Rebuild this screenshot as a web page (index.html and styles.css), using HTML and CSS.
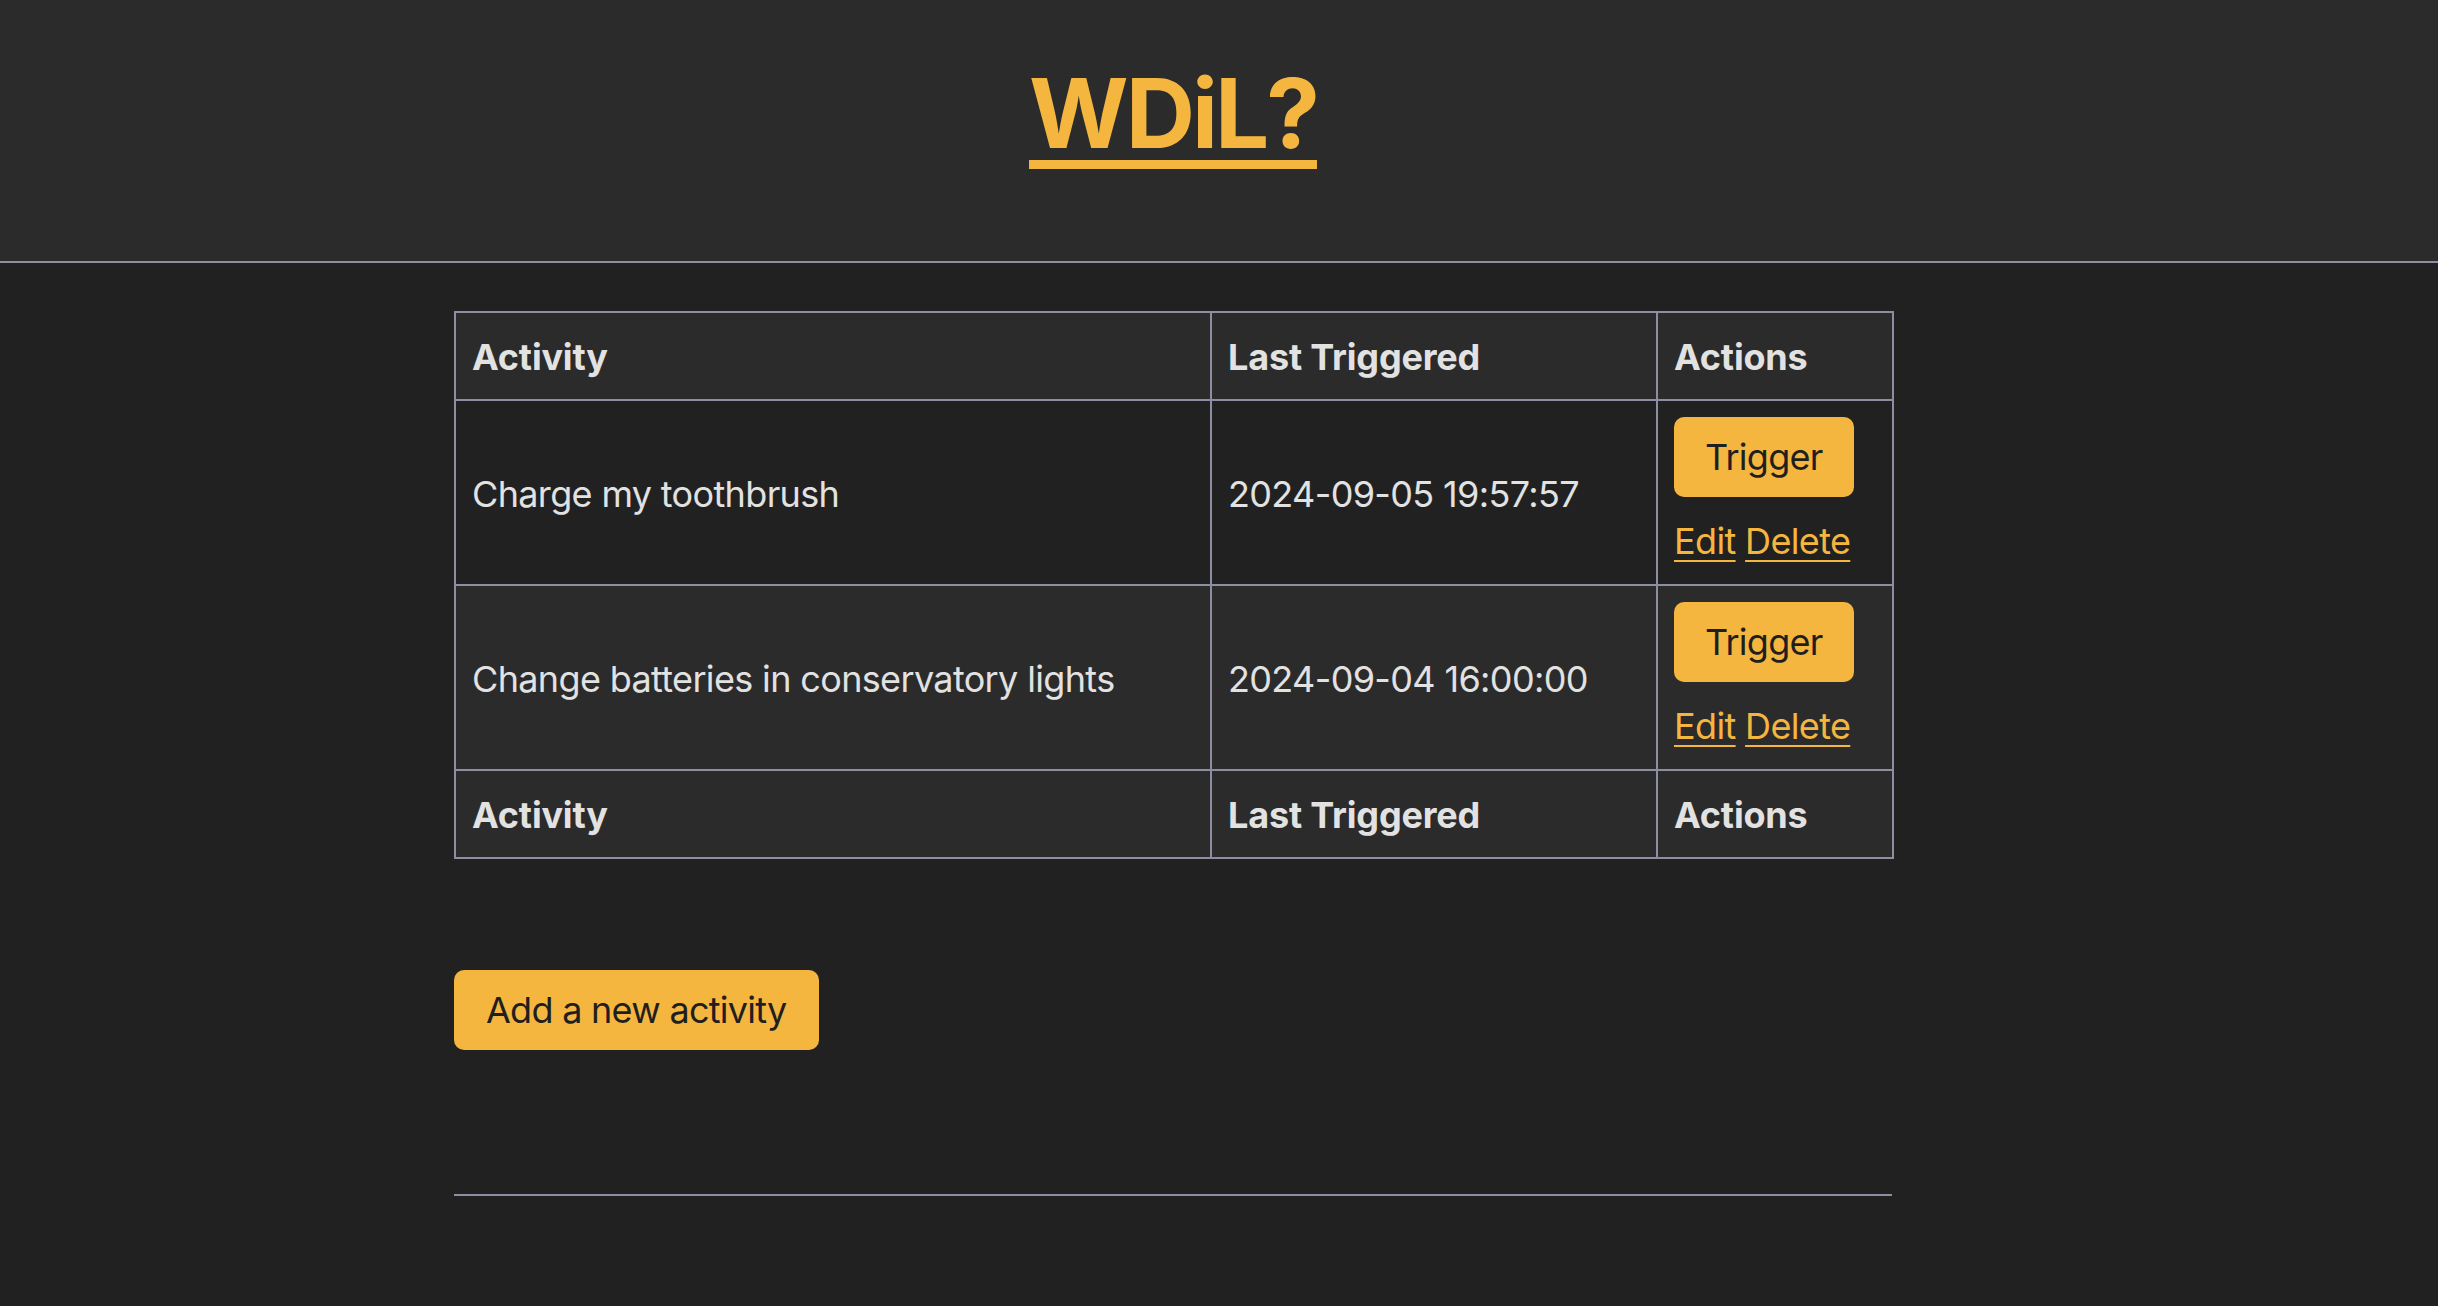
FILE: index.html
```html
<!DOCTYPE html>
<html lang="en">
<head>
<meta charset="utf-8">
<title>WDiL?</title>
<link rel="stylesheet" href="styles.css">
</head>
<body>
<header class="site-header">
  <div class="container header-inner">
    <h1 class="title"><a href="#">WDiL?</a></h1>
  </div>
</header>
<main class="container main">
  <table class="activities">
    <colgroup>
      <col class="col-activity">
      <col class="col-time">
      <col class="col-actions">
    </colgroup>
    <thead>
      <tr><th>Activity</th><th>Last Triggered</th><th>Actions</th></tr>
    </thead>
    <tbody>
      <tr>
        <td>Charge my toothbrush</td>
        <td>2024-09-05 19:57:57</td>
        <td class="actions">
          <button class="btn btn-trigger">Trigger</button>
          <div class="links"><a href="#">Edit</a> <a href="#">Delete</a></div>
        </td>
      </tr>
      <tr class="alt">
        <td>Change batteries in conservatory lights</td>
        <td>2024-09-04 16:00:00</td>
        <td class="actions">
          <button class="btn btn-trigger">Trigger</button>
          <div class="links"><a href="#">Edit</a> <a href="#">Delete</a></div>
        </td>
      </tr>
    </tbody>
    <tfoot>
      <tr><th>Activity</th><th>Last Triggered</th><th>Actions</th></tr>
    </tfoot>
  </table>
  <div class="add-row">
    <button class="btn btn-add">Add a new activity</button>
  </div>
  <hr class="rule">
</main>
</body>
</html>
```
FILE: styles.css
```css
* { box-sizing: border-box; }

html, body {
  margin: 0;
  padding: 0;
  background: #212121;
  color: #e2e2e2;
  font-family: Inter, "Noto Sans", "Liberation Sans", sans-serif;
  font-size: 36px;
  line-height: 1.5;
  letter-spacing: -0.018em;
}

.container {
  width: 1438px;
  margin-left: 454px;
}

.site-header {
  background: #2b2b2b;
  height: 263px;
  border-bottom: 2px solid #8e8ea2;
}

.header-inner {
  display: flex;
  justify-content: center;
  padding-top: 55px;
}

.title {
  margin: 0;
  font-size: 96px;
  font-weight: 700;
  line-height: normal;
  letter-spacing: -3px;
}

.title a {
  color: #f4b63f;
  text-decoration: underline;
  text-decoration-thickness: 9px;
  text-underline-offset: 12px;
}

.main {
  padding-top: 48px;
}

.activities {
  width: 1438px;
  border-collapse: collapse;
  table-layout: fixed;
  border: 2px solid #8e8ea2;
}

.col-activity { width: 756px; }
.col-time { width: 446px; }
.col-actions { width: 236px; }

.activities th,
.activities td {
  border: 2px solid #8e8ea2;
  padding: 17px 16px 15px;
  text-align: left;
  vertical-align: middle;
}

.activities thead th,
.activities tfoot th {
  background: #2b2b2b;
  font-weight: 700;
  letter-spacing: -0.005em;
}

.activities tr.alt td {
  background: #2b2b2b;
}

.activities td.actions {
  padding: 16px;
  white-space: nowrap;
}

.btn {
  font-family: inherit;
  font-size: 36px;
  line-height: 54px;
  letter-spacing: -0.02em;
  padding: 13px 31px;
  background: #f4b63f;
  color: #1f1f1f;
  border: none;
  border-radius: 10px;
  cursor: pointer;
}

.btn-trigger {
  display: block;
  margin-bottom: 17px;
}

.links a {
  color: #f4b63f;
  text-decoration: underline;
  text-decoration-thickness: 2px;
  text-underline-offset: 6px;
}

.add-row {
  padding-top: 111px;
}

.btn-add {
  padding: 13px 32px;
}

.rule {
  margin: 144px 0 0 0;
  border: none;
  border-top: 2px solid #8e8ea2;
  height: 0;
}
```
